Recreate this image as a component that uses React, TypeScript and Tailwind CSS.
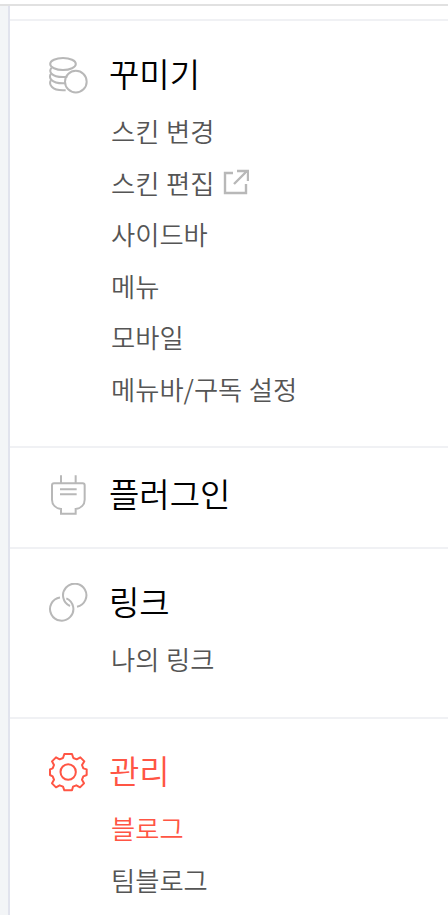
import React from 'react';

type MenuItem = {
  label: string;
  external?: boolean;
  active?: boolean;
};

const decorateItems: MenuItem[] = [
  { label: '스킨 변경' },
  { label: '스킨 편집', external: true },
  { label: '사이드바' },
  { label: '메뉴' },
  { label: '모바일' },
  { label: '메뉴바/구독 설정' },
];

const linkItems: MenuItem[] = [{ label: '나의 링크' }];

const manageItems: MenuItem[] = [
  { label: '블로그', active: true },
  { label: '팀블로그' },
];

const iconProps = {
  viewBox: '24 30 120 120',
  fill: 'none',
  stroke: 'currentColor',
  strokeWidth: 6,
  className: 'h-10 w-10 shrink-0',
};

const CoinsIcon = () => (
  <svg {...iconProps}>
    <ellipse cx="69" cy="57" rx="38.5" ry="18" />
    <path d="M35 68c-10 11-2 28 34 28h13" />
    <path d="M33 86c-8 12 0 29 36 29h6" />
    <path d="M33 105c-8 13 2 31 36 31h8" />
    <circle cx="107.500" cy="110" r="32.500" />
  </svg>
);

const PlugIcon = () => (
  <svg {...iconProps}>
    <path d="M63 31v24M107 31v24M60 73h50M60 88h50" />
    <path d="M42 55h86q6 0 6 6v43c0 16-12 26-27 28v14H63v-14c-15-2-27-12-27-28V61q0-6 6-6z" />
  </svg>
);

// The second arc stops short where the rings cross
const LinkIcon = () => (
  <svg {...iconProps}>
    <path d="M60 73.400A35 35 0 1 0 79 75.900" />
    <path d="M111 101.300A35 35 0 1 0 90 99" />
  </svg>
);

const GearIcon = () => (
  <svg {...iconProps} strokeLinejoin="round">
    <path d="M73 36h23l4 12 10 4 11-6 12 12-7 11 4 10 10 3v17l-10 4-4 10 6 11-12 12-11-6-10 4-3 11H73l-4-11-10-4-11 6-12-12 6-11-4-10-8-4V82l8-3 4-10-6-11 12-12 11 6 10-4z" />
    <circle cx="84.500" cy="90" r="23" />
  </svg>
);

const ExternalIcon = () => (
  <svg viewBox="0 0 26 26" fill="none" stroke="currentColor" strokeWidth="2.400" className="ml-[9px] h-[26px] w-[26px] text-[#b8b8b8]">
    <path d="M10 4H2v20h21v-9M14 2h11v10M24 2L11 15" />
  </svg>
);

type SectionProps = {
  title: string;
  icon: React.ReactNode;
  items?: MenuItem[];
  active?: boolean;
  className: string;
};

function Section({ title, icon, items = [], active = false, className }: SectionProps) {
  return (
    <section className={`border-t-2 border-[#f0f1f4] pl-[38px] ${className}`}>
      <h2 className={`flex h-[52px] items-center ${active ? 'text-[#ff5544]' : 'text-black'}`}>
        <span className={active ? '' : 'text-[#b8b8b8]'}>{icon}</span>
        <span className="ml-[21px] pb-1 text-[33px] leading-[48px]">{title}</span>
      </h2>
      {items.length > 0 && (
        <ul className="mt-1 pl-[63px]">
          {items.map((item) => (
            <li
              key={item.label}
              className={`flex h-[51.6px] items-center text-[26.3px] [word-spacing:0.7px] ${item.active ? 'text-[#ff5544]' : 'text-[#555]'}`}
            >
              {item.label}
              {item.external && <ExternalIcon />}
            </li>
          ))}
        </ul>
      )}
    </section>
  );
}

export default function App() {
  return (
    <div className="flex h-[915px] flex-col overflow-hidden bg-white font-['Noto_Sans_CJK_KR',sans-serif] font-[350]">
      <div className="h-1.5 shrink-0 border-b-2 border-[#e1e1e1]" />
      <div className="flex min-h-0 flex-1">
        <div className="w-2.5 shrink-0 border-r-2 border-[#e1e3ed] bg-[#f3f5f7]" />
        <nav className="flex-1 pt-[13px]">
          <Section title="꾸미기" icon={<CoinsIcon />} items={decorateItems} className="h-[427px] pt-7" />
          <Section title="플러그인" icon={<PlugIcon />} className="h-[101px] pt-[21px]" />
          <Section title="링크" icon={<LinkIcon />} items={linkItems} className="h-[170px] pt-7" />
          <Section title="관리" icon={<GearIcon />} items={manageItems} active className="pt-[27px]" />
        </nav>
      </div>
    </div>
  );
}
